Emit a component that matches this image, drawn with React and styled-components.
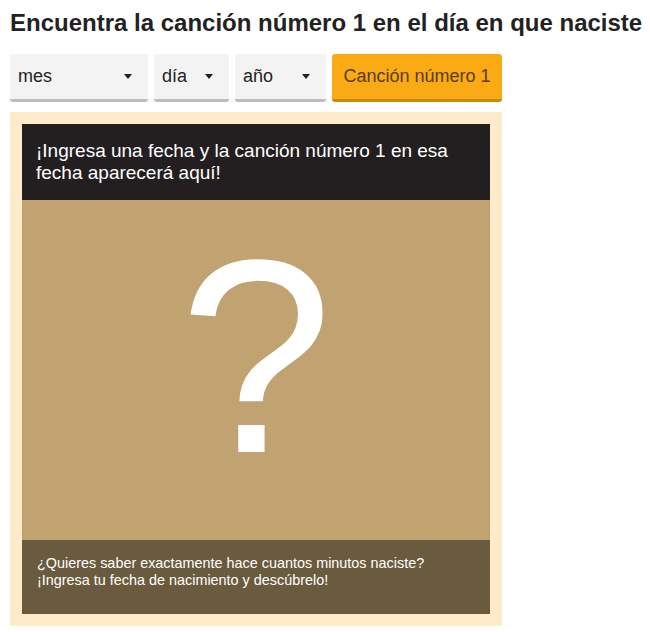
import React from "react";
import styled, { createGlobalStyle } from "styled-components";

const GlobalStyle = createGlobalStyle`
  body {
    margin: 0;
    background: #fff;
    font-family: "Liberation Sans", Arial, sans-serif;
  }
`;

const Page = styled.div`
  padding: 8px 10px;
`;

const Title = styled.h1`
  margin: 0 0 16px;
  font-size: 24px;
  font-weight: bold;
  color: #222;
  line-height: 30px;
  white-space: nowrap;
`;

const Controls = styled.div`
  display: flex;
  gap: 6px;
  margin-bottom: 10px;
`;

const Select = styled.div`
  display: flex;
  align-items: center;
  justify-content: space-between;
  width: ${(p) => p.width}px;
  height: 45px;
  box-sizing: content-box;
  padding: 0 16px 0 8px;
  background: #f3f3f3;
  border-bottom: 3px solid #bdbdbd;
  border-radius: 3px;
  font-size: 18px;
  color: #222;
`;

const Caret = styled.span`
  width: 0;
  height: 0;
  border-left: 4px solid transparent;
  border-right: 4px solid transparent;
  border-top: 5px solid #222;
`;

const Button = styled.button`
  height: 48px;
  width: 170px;
  border: 0;
  border-bottom: 3px solid #c98a0c;
  border-radius: 3px;
  background: #f9aa14;
  color: #5a3a06;
  font-family: inherit;
  font-size: 18px;
`;

const Panel = styled.div`
  width: 468px;
  padding: 12px;
  background: #feebc9;
`;

const Header = styled.div`
  background: #231f20;
  color: #fff;
  font-size: 19px;
  line-height: 22px;
  padding: 16px 14px 16px;
`;

const Mystery = styled.div`
  height: 340px;
  padding-bottom: 28px;
  box-sizing: border-box;
  background: #c0a371;
  display: flex;
  align-items: center;
  justify-content: center;
  color: #fff;
  font-size: 276px;
  line-height: 1;
`;

const Footer = styled.div`
  background: #6b5b3e;
  color: #fff;
  font-size: 14.4px;
  line-height: 17px;
  padding: 15px 15px 0;
  height: 59px;
`;

const Dropdown = ({ label, width }) => (
  <Select width={width}>
    {label}
    <Caret />
  </Select>
);

export default function App() {
  return (
    <Page>
      <GlobalStyle />
      <Title>Encuentra la canción número 1 en el día en que naciste</Title>
      <Controls>
        <Dropdown label="mes" width={114} />
        <Dropdown label="día" width={51} />
        <Dropdown label="año" width={67} />
        <Button>Canción número 1</Button>
      </Controls>
      <Panel>
        <Header>
          ¡Ingresa una fecha y la canción número 1 en esa fecha aparecerá aquí!
        </Header>
        <Mystery>?</Mystery>
        <Footer>
          ¿Quieres saber exactamente hace cuantos minutos naciste?
          <br />
          ¡Ingresa tu fecha de nacimiento y descúbrelo!
        </Footer>
      </Panel>
    </Page>
  );
}
